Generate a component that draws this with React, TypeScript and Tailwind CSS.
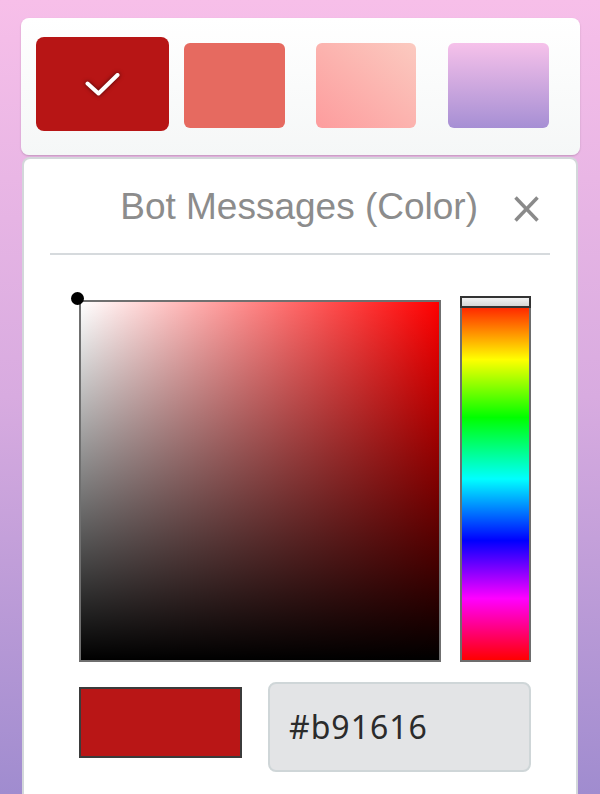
import React from "react";

export default function App() {
  return (
    <div className="w-[600px] h-[794px] overflow-hidden bg-[linear-gradient(to_bottom,#f7bfe9,#d8abe0_50%,#a08ccf)] pt-[18px] pl-[21px]">
      {/* Top swatch card */}
      <div className="w-[559px] h-[137px] rounded-lg bg-[linear-gradient(to_bottom,#ffffff,#f5f7f7)] shadow-[0_1px_2px_rgba(0,0,0,0.18)] flex items-start pl-[15px]">
        <div className="mt-[19px] w-[133px] h-[94px] rounded-lg bg-[#b71515] flex items-center justify-center">
          <svg width="40" height="30" viewBox="0 0 40 30" className="drop-shadow-[0_0_2px_rgba(0,0,0,0.6)]">
            <polyline points="4.5,14.5 15.5,24.5 34.5,6" fill="none" stroke="white" strokeWidth="4" strokeLinecap="round" strokeLinejoin="round" />
          </svg>
        </div>
        <div className="mt-[25px] ml-[15px] w-[101px] h-[85px] rounded-md bg-[#e66a60]" />
        <div className="mt-[25px] ml-[31px] w-[100px] h-[85px] rounded-md bg-[linear-gradient(to_top_right,#fd9c9d,#fbcac0)]" />
        <div className="mt-[25px] ml-[32px] w-[101px] h-[85px] rounded-md bg-[linear-gradient(to_bottom,#f6c1ea,#a68fd4)]" />
      </div>

      {/* Color picker card */}
      <div className="mt-[2px] ml-[1px] w-[556px] h-[660px] rounded-t-lg border-2 border-b-0 border-[#d3d7da] bg-white">
        <div className="flex items-start justify-end pr-[36px] mt-[29px]">
          <div className="text-[37px] leading-none text-[#8c8c8c] font-['Liberation_Sans',Arial,sans-serif]">
            Bot Messages (Color)
          </div>
          <svg width="27" height="28" viewBox="0 0 27 28" className="ml-[35px] mt-[7px]">
            <line x1="2.5" y1="2.5" x2="24.5" y2="25.5" stroke="#8a8a8a" strokeWidth="3.5" />
            <line x1="24.5" y1="2.5" x2="2.5" y2="25.5" stroke="#8a8a8a" strokeWidth="3.5" />
          </svg>
        </div>
        <div className="mx-[26px] mt-[28px] h-[2px] bg-[#d6dadd]" />

        <div className="flex items-end ml-[55px] mt-[41px]">
          <div className="relative w-[362px] h-[362px] border-2 border-[#6f6f6f]">
            <div className="w-full h-full bg-[linear-gradient(to_right,#ffffff,#ff0000)]">
              <div className="w-full h-full bg-[linear-gradient(to_top,#000000,rgba(0,0,0,0))]" />
            </div>
            <div className="absolute -left-[10px] -top-[10px] w-[13px] h-[13px] rounded-full bg-black" />
          </div>
          <div className="relative ml-[19px] w-[71px] h-[366px] border-2 border-[#6d6d6d] bg-[linear-gradient(to_bottom,#f00_0%,#ff0_17%,#0f0_33%,#0ff_50%,#00f_67%,#f0f_83%,#f00_100%)]">
            <div className="absolute -left-[2px] -right-[2px] -top-[2px] h-[12px] border-2 border-[#333] bg-[linear-gradient(to_bottom,#f2f2f2,#d6d6d6)]" />
          </div>
        </div>

        <div className="flex items-start ml-[55px] mt-[20px]">
          <div className="mt-[5px] w-[163px] h-[71px] border-2 border-[#3b3b3b] bg-[#b91616]" />
          <div className="ml-[26px] w-[263px] h-[90px] rounded-lg border-2 border-[#cfd6d8] bg-[#e3e4e6] flex items-center pl-[19px]">
            <span className="text-[32px] tracking-[1px] text-[#2b2b2b] font-['Noto_Sans',sans-serif]">#b91616</span>
          </div>
        </div>
      </div>
    </div>
  );
}
